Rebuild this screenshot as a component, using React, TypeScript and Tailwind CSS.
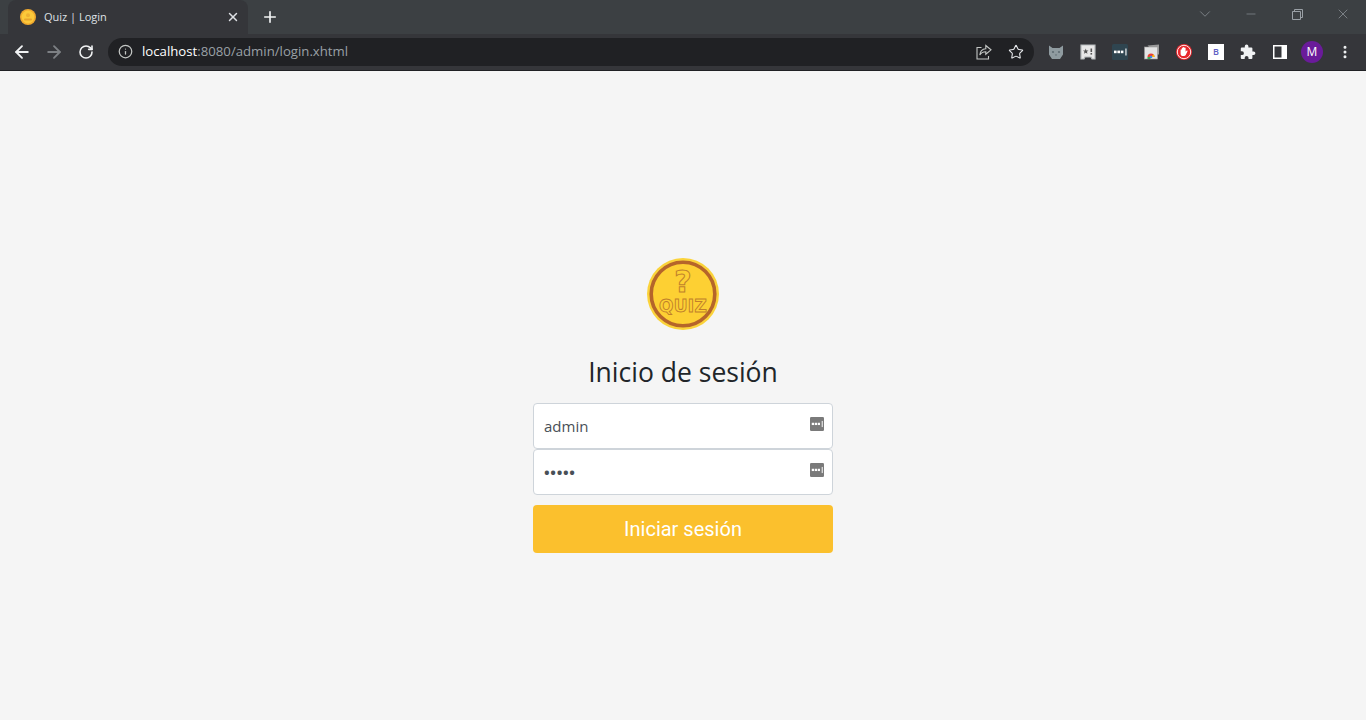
import type { ReactNode } from "react"
import { ArrowLeft, ArrowRight, Info, Minus, Plus, RotateCw, Star, X, ChevronDown, MoreVertical } from "lucide-react"

const ui = "font-['Open_Sans',_'Liberation_Sans',sans-serif]"

const Favicon = () => (
  <svg width="16" height="16" viewBox="0 0 16 16">
    <circle cx="8" cy="8" r="8" fill="#f0a92e" />
    <circle cx="8" cy="8" r="6.4" fill="#fcc93a" />
    <circle cx="8" cy="6.2" r="2" fill="#eeb033" />
    <rect x="4" y="9.5" width="8" height="2" rx="1" fill="#e8a52f" />
  </svg>
)

const Logo = () => (
  <svg width="72" height="72" viewBox="0 0 72 72">
    <circle cx="36" cy="36" r="36" fill="#fbd33a" />
    <circle cx="36" cy="36" r="31.8" fill="#fdd033" stroke="#b5652a" strokeWidth="3.6" />
    <text
      x="36"
      y="34"
      textAnchor="middle"
      fontSize="30"
      fontWeight="700"
      fill="#fdd033"
      stroke="#c07f2b"
      strokeWidth="1"
      fontFamily="DejaVu Sans, sans-serif"
    >
      ?
    </text>
    <text
      x="36"
      y="54"
      textAnchor="middle"
      fontSize="17"
      fontWeight="700"
      letterSpacing="0.3"
      fill="#fdd033"
      stroke="#c07f2b"
      strokeWidth="0.9"
      fontFamily="DejaVu Sans, sans-serif"
    >
      QUIZ
    </text>
  </svg>
)

const ShareIcon = () => (
  <svg width="16" height="16" viewBox="0 0 16 16" fill="none" stroke="#c4c7c5" strokeWidth="1.1">
    <path d="M5.5 3.5H1v11.5h11.5v-3" />
    <path d="M9.8 1.5l5.2 4.3-5.2 4.4V7.7C7 7.7 5 8.7 3.8 11c.3-3.6 2.6-5.9 6-6.2z" />
  </svg>
)

const CatIcon = () => (
  <svg width="16" height="16" viewBox="0 0 16 16">
    <path d="M1 1.5l3.5 2.5h7L15 1.5v9L12 15H4l-3-4.5z" fill="#8f9ba0" />
    <circle cx="5" cy="8" r="1.1" fill="#5f6c73" />
    <circle cx="11" cy="8" r="1.1" fill="#5f6c73" />
    <path d="M6.8 10.5h2.4L8 12z" fill="#5f6c73" />
  </svg>
)

const TicketIcon = () => (
  <svg width="16" height="16" viewBox="0 0 16 16">
    <path d="M1 1h14v14h-3l-1-2H5l-1 2H1z" fill="#e8e8e8" stroke="#b5b9bb" strokeWidth="1.2" />
    <path d="M5.7 4.5l.8 1.9 2 .1-1.6 1.3.6 2-1.8-1.1-1.8 1.1.6-2L3 6.5l2-.1z" fill="#555" />
    <rect x="10.5" y="4.5" width="1.6" height="3.5" fill="#555" />
    <rect x="10.5" y="9" width="1.6" height="1.6" fill="#555" />
  </svg>
)

const DotsKey = ({ bg, size }: { bg: string; size: number }) => (
  <svg width={size} height={size} viewBox="0 0 16 16">
    <rect width="16" height="16" rx="1.5" fill={bg} />
    <rect x="2" y="6.6" width="2.6" height="2.6" fill="#fff" />
    <rect x="5.4" y="6.6" width="2.6" height="2.6" fill="#fff" />
    <rect x="8.8" y="6.6" width="2.6" height="2.6" fill="#fff" />
    <rect x="13.4" y="4.5" width="1.1" height="7" fill="#fff" />
  </svg>
)

const TabsIcon = () => (
  <svg width="16" height="16" viewBox="0 0 16 16">
    <path d="M3.5 1.5L15 0.5v10h-2z" fill="#9a9a9a" />
    <rect x="0.5" y="3" width="13" height="12" fill="#e4e4e4" stroke="#999" strokeWidth="0.6" />
    <path d="M3.5 13a3.5 3.5 0 0 1 7 0z" fill="#e84335" />
    <path d="M7 13l3.5 0a3.5 3.5 0 0 0-1-2.4z" fill="#fbbc05" />
    <circle cx="7" cy="13" r="1.3" fill="#4285f4" />
    <path d="M3.5 13h3v2h-3z" fill="#34a853" />
  </svg>
)

const StopIcon = () => (
  <svg width="16" height="16" viewBox="0 0 16 16">
    <circle cx="8" cy="8" r="8" fill="#e9262b" />
    <circle cx="8" cy="8" r="6.7" fill="none" stroke="#fff" strokeWidth="0.9" />
    <path d="M4.6 6c0-.9 1.2-.9 1.2 0V4.2c0-.9 1.2-.9 1.2 0V3.6c0-.9 1.3-.9 1.3 0v.5c0-.9 1.3-.9 1.3 0v3.6l.8-.9c.7-.7 1.5 0 1 .7l-1.7 3.6c-.3.6-.9 1-1.7 1H7c-1.4 0-2.4-1-2.4-2.4z" fill="#fff" />
  </svg>
)

const PuzzleIcon = () => (
  <svg width="16" height="16" viewBox="0 0 16 16" fill="#f1f3f4">
    <path d="M13.6 7.4h-1.2V4.4a1 1 0 0 0-1-1H8.4V2.2a1.8 1.8 0 0 0-3.6 0v1.2H1.8a1 1 0 0 0-1 1v2.9H2a1.9 1.9 0 0 1 0 3.8H.8v2.9a1 1 0 0 0 1 1h2.9v-1.2a1.9 1.9 0 0 1 3.8 0v1.2h2.9a1 1 0 0 0 1-1v-3h1.2a1.8 1.8 0 0 0 0-3.6z" />
  </svg>
)

const PanelIcon = () => (
  <svg width="14" height="14" viewBox="0 0 14 14">
    <rect width="14" height="14" fill="#fff" />
    <rect x="1.5" y="1.5" width="7" height="11" fill="#35363a" />
  </svg>
)

const extensions = [
  <CatIcon key="cat" />,
  <TicketIcon key="ticket" />,
  <DotsKey key="dots" bg="#2f4550" size={16} />,
  <TabsIcon key="tabs" />,
  <StopIcon key="stop" />,
  <div key="b" className="flex h-4 w-4 items-center justify-center bg-white text-[9px] font-semibold text-[#5f5fc4]">
    B
  </div>,
  <PuzzleIcon key="puzzle" />,
  <PanelIcon key="panel" />,
  <div key="avatar" className="flex h-[22px] w-[22px] items-center justify-center rounded-full bg-[#6a1b9a] text-xs text-white">
    M
  </div>,
]

const Field = ({ children }: { children: ReactNode }) => (
  <div className="relative flex h-[46px] items-center rounded border border-[#ced4da] bg-white px-[10px] text-[15px] text-[#495057]">
    {children}
    <span className="absolute right-2 top-[13px]">
      <DotsKey bg="#7a7a7a" size={14} />
    </span>
  </div>
)

export default function App() {
  return (
    <div className={`flex h-screen flex-col overflow-hidden bg-[#f5f5f5] ${ui}`}>
      <div className="flex h-[34px] shrink-0 bg-[#3c4043] pl-2">
        <div className="flex w-[240px] items-center rounded-t-lg bg-[#35363a] pl-3 pr-2">
          <Favicon />
          <span className="ml-2 flex-1 text-[11px] text-[#dfe1e5]">Quiz | Login</span>
          <X size={14} color="#dfe1e5" strokeWidth={2.5} />
        </div>
        <div className="ml-3 flex w-[20px] items-center justify-center">
          <Plus size={18} color="#f1f3f4" strokeWidth={2.2} />
        </div>
        <div className="ml-auto flex">
          <div className="flex w-[46px] items-center justify-center pb-[6px]">
            <ChevronDown size={18} color="#80868b" strokeWidth={1.2} />
          </div>
          <div className="flex w-[46px] items-center justify-center pb-[6px]">
            <Minus size={14} color="#9aa0a6" strokeWidth={1} />
          </div>
          <div className="flex w-[46px] items-center justify-center pb-[6px]">
            <svg width="11" height="11" viewBox="0 0 11 11" fill="none" stroke="#9aa0a6">
              <path d="M.5 2.5h8v8h-8z M2.5 2.5v-2h8v8h-2" />
            </svg>
          </div>
          <div className="flex w-[46px] items-center justify-center pb-[6px]">
            <X size={16} color="#9aa0a6" strokeWidth={1} />
          </div>
        </div>
      </div>

      <div className="flex h-[37px] shrink-0 items-center border-b border-[#202124] bg-[#35363a] pb-px">
        <div className="flex w-[108px] shrink-0 items-center pl-[6px]">
          <div className="flex w-8 justify-center">
            <ArrowLeft size={20} color="#f1f3f4" strokeWidth={2.2} />
          </div>
          <div className="flex w-8 justify-center">
            <ArrowRight size={20} color="#7d8084" strokeWidth={2.2} />
          </div>
          <div className="flex w-8 justify-center">
            <RotateCw size={16} color="#f1f3f4" strokeWidth={2.4} />
          </div>
        </div>
        <div className="flex h-7 w-[926px] shrink-0 items-center rounded-full bg-[#202124] pl-[10px] pr-[10px]">
          <Info size={15} color="#c4c7c5" />
          <span className="ml-[9px] flex-1 pt-px text-[13.2px] leading-none text-[#9aa0a6]">
            <span className="text-white">localhost</span>:8080/admin/login.xhtml
          </span>
          <ShareIcon />
          <span className="ml-4 flex">
            <Star size={16} color="#e8eaed" strokeWidth={1.6} />
          </span>
        </div>
        <div className="ml-[6px] flex">
          {extensions.map((icon, i) => (
            <div key={i} className="flex h-7 w-8 items-center justify-center">
              {icon}
            </div>
          ))}
          <div className="flex h-7 w-8 items-center justify-center pl-[2px]">
            <MoreVertical size={16} color="#f1f3f4" strokeWidth={2.5} />
          </div>
        </div>
      </div>

      <main className="flex flex-1 flex-col items-center justify-center pt-5">
        <Logo />
        <h1 className="mb-[13px] mt-6 text-[26.5px] leading-[36px] text-[#212529]">Inicio de sesión</h1>
        <div className="w-[300px]">
          <Field>admin</Field>
          <Field>
            <span className="font-bold tracking-[0.7px]">•••••</span>
          </Field>
          <button className="mt-[10px] h-12 w-full rounded bg-[#fbc02d] font-['Roboto',sans-serif] text-xl text-white">
            Iniciar sesión
          </button>
        </div>
      </main>
    </div>
  )
}
